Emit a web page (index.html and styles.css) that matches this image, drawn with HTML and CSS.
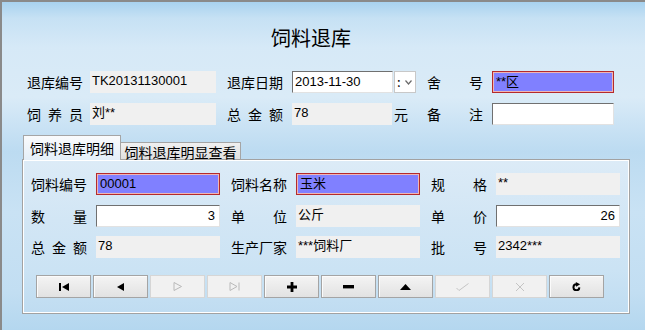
FILE: index.html
```html
<!DOCTYPE html>
<html>
<head>
  <title>饲料退库</title>
  <meta charset="utf-8">
  <link rel="stylesheet" href="styles.css">
</head>
<body>
  <div class="window">
    <h1 class="title">饲料退库</h1>

    <!-- header fields -->
    <div class="form head">
      <span class="label">退库编号</span>
      <div class="field ro w126">TK20131130001</div>
      <span class="label">退库日期</span>
      <div class="group">
        <div class="field input w101">2013-11-30</div>
        <div class="drop">:<svg width="7" height="5" viewBox="0 0 7 5"><path d="M0.5 0.5L3.5 4L6.5 0.5" fill="none" stroke="#6a6a6a" stroke-width="1.2"/></svg></div>
      </div>
      <span class="label">舍 号</span>
      <div class="field hl w122">**区</div>

      <span class="label">饲 养 员</span>
      <div class="field ro w126">刘**</div>
      <span class="label">总 金 额</span>
      <div class="group">
        <div class="field ro w100">78</div>
        <span class="unit">元</span>
      </div>
      <span class="label">备 注</span>
      <div class="field input w122"></div>
    </div>

    <div class="tabs">
      <div class="tab active">饲料退库明细</div>
      <div class="tab">饲料退库明显查看</div>
    </div>

    <div class="panel">
      <div class="form detail">
        <span class="label">饲料编号</span>
        <div class="field hl">00001</div>
        <span class="label">饲料名称</span>
        <div class="field hl">玉米</div>
        <span class="label">规 格</span>
        <div class="field ro">**</div>

        <span class="label">数 量</span>
        <div class="field input num">3</div>
        <span class="label">单 位</span>
        <div class="field ro">公斤</div>
        <span class="label">单 价</span>
        <div class="field input num">26</div>

        <span class="label">总 金 额</span>
        <div class="field ro">78</div>
        <span class="label">生产厂家</span>
        <div class="field ro">***饲料厂</div>
        <span class="label">批 号</span>
        <div class="field ro">2342***</div>
      </div>

      <div class="toolbar">
        <div class="btn"><svg width="10" height="8" viewBox="0 0 10 8"><rect x="0" y="0" width="2" height="8"/><path d="M10 0V8L3 4Z"/></svg></div>
        <div class="btn"><svg width="7" height="8" viewBox="0 0 7 8"><path d="M7 0V8L0 4Z"/></svg></div>
        <div class="btn off"><svg width="10" height="9" viewBox="0 0 10 9"><path d="M1 0.5V8.5M1 0.5L8.5 4.5L1 8.5" fill="none" stroke="#b9b9b9"/></svg></div>
        <div class="btn off"><svg width="11" height="9" viewBox="0 0 11 9"><path d="M1 0.5V8.5L8 4.5Z M10 0.5V8.5" fill="none" stroke="#b9b9b9"/></svg></div>
        <div class="btn"><svg width="10" height="10" viewBox="0 0 10 10"><path d="M3.6 0H6.4V3.6H10V6.4H6.4V10H3.6V6.4H0V3.6H3.6Z"/></svg></div>
        <div class="btn"><svg width="11" height="4" viewBox="0 0 11 4"><rect width="11" height="3.4"/></svg></div>
        <div class="btn"><svg width="11" height="6" viewBox="0 0 11 6"><path d="M0 6L5.5 0L11 6Z"/></svg></div>
        <div class="btn off"><svg width="13" height="8" viewBox="0 0 13 8"><path d="M0.5 5L3 7.5L12.5 0.5" fill="none" stroke="#c4c4c4"/></svg></div>
        <div class="btn off"><svg width="10" height="10" viewBox="0 0 10 10"><path d="M1 1L9 9M9 1L1 9" fill="none" stroke="#c4c4c4"/></svg></div>
        <div class="btn"><svg width="9" height="9" viewBox="0 0 10 10"><path d="M8.2 6A3.3 3.3 0 1 1 5 2.6" fill="none" stroke="#000" stroke-width="2.2"/><path d="M4.2 0L9 2.6L4.6 5.4Z"/></svg></div>
      </div>
    </div>
  </div>
</body>
</html>
```

FILE: styles.css
```css
body {
  margin: 0;
  font-family: "Noto Sans CJK SC", sans-serif;
  font-size: 14px;
  color: #000;
}
.window {
  width: 645px;
  height: 330px;
  box-sizing: border-box;
  border-left: 2px solid #8a8a8a;
  border-top: 2px solid #8a8a8a;
  overflow: hidden;
  background: linear-gradient(180deg, #a8d2ef 0, #c6e1f4 16px, #d6e9f7 45px, #daebf7 95px, #c9e2f4 125px, #bcdbf1 150px, #c9e2f4 210px, #c2def2 290px, #b4d7ef 328px);
}
.title {
  margin: 24px 0 0;
  padding-right: 25px;
  height: 24px;
  line-height: 24px;
  font-size: 20px;
  font-weight: normal;
  text-align: center;
}
.form {
  display: grid;
  align-items: center;
}
.head {
  margin: 21px 0 0 25px;
  grid-template-columns: 63px 137px 65px 135px 65px 122px;
  grid-auto-rows: 22px;
  row-gap: 10px;
}
.detail {
  grid-template-columns: 65px 135px 65px 135px 65px 124px;
  grid-auto-rows: 22px;
  row-gap: 9.5px;
}
.label {
  width: 56px;
  text-align: justify;
  text-align-last: justify;
  line-height: 20px;
}
.group {
  display: flex;
  align-items: center;
}
.field {
  box-sizing: border-box;
  height: 22px;
  padding: 0 2px;
  font-family: "Liberation Sans", "Noto Sans CJK SC", sans-serif;
  font-size: 13px;
  white-space: nowrap;
  overflow: hidden;
}
.detail .field {
  width: 124px;
}
.ro {
  background-color: #f0f0f0;
  padding-top: 1px;
  line-height: 17px;
}
.hl {
  background-color: #8080ff;
  border: 1px solid #b52a2c;
  box-shadow: inset 0 0 0 1px #eeb6b6;
  line-height: 20px;
  padding-left: 3px;
}
.input {
  background-color: #fff;
  border: 1px solid;
  border-color: #707070 #e2e2e2 #e2e2e2 #707070;
  line-height: 20px;
}
.num {
  text-align: right;
  padding-right: 4px;
}
.w126 { width: 126px; }
.w122 { width: 122px; }
.w101 { width: 101px; }
.w100 { width: 100px; }
.drop {
  box-sizing: border-box;
  width: 22px;
  height: 22px;
  margin-left: 1px;
  background-color: #fff;
  border: 1px solid #c8c8c8;
  display: flex;
  align-items: center;
  justify-content: space-between;
  padding: 0 3px 0 2px;
  font-size: 13px;
  line-height: 18px;
}
.unit {
  margin-left: 2px;
}
.tabs {
  display: flex;
  align-items: flex-end;
  height: 24px;
  margin: 10px 0 0 21px;
}
.tab {
  box-sizing: border-box;
  height: 17px;
  width: 120px;
  border: 1px solid #a5a5a5;
  border-left: none;
  border-bottom: none;
  background: linear-gradient(180deg, #f0f0f0, #e0e0e0);
  font-size: 14px;
  line-height: 16px;
  text-align: center;
  padding-top: 1px;
}
.tab.active {
  position: relative;
  z-index: 1;
  width: 98px;
  height: 25px;
  margin-bottom: -1px;
  border-left: 1px solid #a5a5a5;
  background: linear-gradient(180deg, #fafbfc, #e4eff8);
  line-height: 22px;
}
.panel {
  box-sizing: border-box;
  width: 608px;
  height: 155px;
  margin: 0 0 0 20px;
  padding: 13px 0 0 8px;
  border: 1px solid #a2a2a2;
  box-shadow: inset 1px 1px 0 #fff, inset -1px -1px 0 #fff;
  background: linear-gradient(180deg, #dcebf7 0, #d2e6f5 60px, #cbe3f4 110px, #bfdcf1 153px);
}
.toolbar {
  display: flex;
  gap: 2px;
  margin: 17px 0 0 5px;
}
.btn {
  box-sizing: border-box;
  width: 55px;
  height: 23px;
  border: 1px solid #a4a4a4;
  background: linear-gradient(180deg, #f4f4f4, #e2e2e2);
  box-shadow: inset 1px 1px 0 #fbfbfb;
  display: flex;
  align-items: center;
  justify-content: center;
}
.btn.off {
  border-color: #d6d6d6;
  background: #f1f1f1;
  box-shadow: none;
}
```
